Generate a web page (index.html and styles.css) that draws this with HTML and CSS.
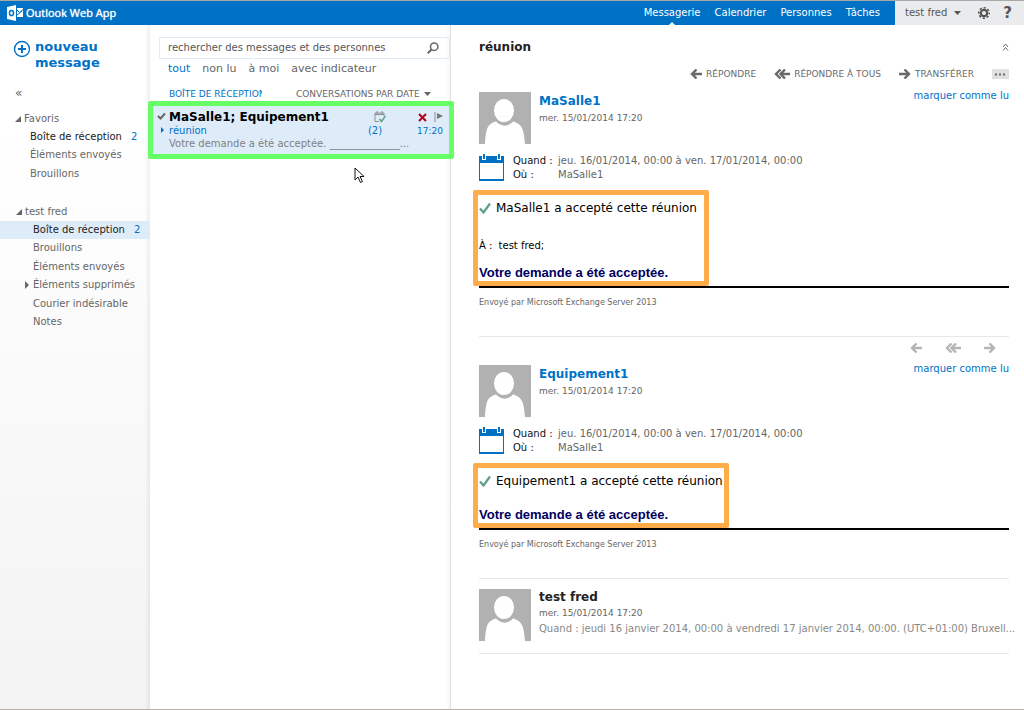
FILE: index.html
```html
<!DOCTYPE html>
<html lang="fr">
<head>
<meta charset="utf-8">
<title>Outlook Web App</title>
<link rel="stylesheet" href="styles.css">
</head>
<body>
<svg class="defs" aria-hidden="true">
  <symbol id="person" viewBox="0 0 52 52"><path fill="#b1b1b1" d="M0 0h52v52H0z"/><ellipse cx="25" cy="18.500" rx="10" ry="11.500" fill="#fff"/><path fill="#fff" d="M6 52C7 37 8 32 17 29.500c5 5.500 12 5.500 17 0C43 32 45 37 46 52z"/></symbol>
  <symbol id="calendar" viewBox="0 0 25 27"><path fill="#0072c6" d="M0 2h25v25H0z"/><path fill="#fff" d="M1 9h23v16H1zM3 0h4v6H3zM18 0h4v6h-4z"/><path fill="#0072c6" d="M4 0h2v5H4zM19 0h2v5h-2z"/></symbol>
  <symbol id="left" viewBox="0 0 12 10"><path d="M6.500 .500L2 5l4.500 4.500M2 5h10" fill="none" stroke="currentColor" stroke-width="2.400"/></symbol>
  <symbol id="left-all" viewBox="0 0 16 10"><path d="M6.500 .500L2 5l4.500 4.500M11 .500L6.500 5 11 9.500M6 5h10" fill="none" stroke="currentColor" stroke-width="2.400"/></symbol>
  <symbol id="right" viewBox="0 0 12 10"><path d="M5.500 .500L10 5 5.500 9.500M10 5H0" fill="none" stroke="currentColor" stroke-width="2.400"/></symbol>
  <symbol id="tick" viewBox="0 0 12 12"><path d="M1 6.500l3.500 4L11 1.500" fill="none" stroke="currentColor" stroke-width="2.200"/></symbol>
  <symbol id="caret" viewBox="0 0 7 4"><path d="M0 0h7L3.500 4z" fill="currentColor"/></symbol>
  <symbol id="open" viewBox="0 0 6 6"><path d="M6 0v6H0z" fill="currentColor"/></symbol>
  <symbol id="closed" viewBox="0 0 4 8"><path d="M0 0l4 4-4 4z" fill="currentColor"/></symbol>
</svg>

<header class="topbar">
  <a class="brand" href="#">
    <svg width="16" height="16" viewBox="0 0 16 16"><path fill="#fff" d="M0 2l9-2v16l-9-2zM10 3h6v9h-6z"/><ellipse cx="4.500" cy="8" rx="2" ry="2.600" fill="none" stroke="#0072c6" stroke-width="1.500"/><path d="M10 5l2.500 2.500L16 4.500M10 10l5-4" fill="none" stroke="#0072c6"/></svg>
    Outlook Web App
  </a>
  <nav class="modules">
    <a class="current" href="#">Messagerie</a>
    <a href="#">Calendrier</a>
    <a href="#">Personnes</a>
    <a href="#">Tâches</a>
  </nav>
  <div class="account">
    <button class="user">test fred <svg width="7" height="4"><use href="#caret"/></svg></button>
    <button aria-label="Paramètres"><svg width="12" height="12" viewBox="0 0 12 12"><g stroke="#555" fill="none"><circle cx="6" cy="6" r="3.200" stroke-width="2.200"/><circle cx="6" cy="6" r="5.200" stroke-width="1.600" stroke-dasharray="2.200 1.884" stroke-dashoffset="1.100"/></g></svg></button>
    <button class="help" aria-label="Aide">?</button>
  </div>
</header>

<main class="panes">
  <aside class="folders">
    <button class="compose">
      <svg width="18" height="18" viewBox="0 0 18 18" fill="none" stroke="#0072c6"><circle cx="9" cy="9" r="7.500" stroke-width="1.400"/><path d="M5 9h8M9 5v8" stroke-width="2"/></svg>
      <span>nouveau message</span>
    </button>
    <button class="collapse" aria-label="Réduire">«</button>
    <section class="group">
      <h2><svg width="6" height="6"><use href="#open"/></svg>Favoris</h2>
      <ul>
        <li><a class="unread" href="#">Boîte de réception <b>2</b></a></li>
        <li><a href="#">Éléments envoyés</a></li>
        <li><a href="#">Brouillons</a></li>
      </ul>
    </section>
    <section class="group mailbox">
      <h2><svg width="6" height="6"><use href="#open"/></svg>test fred</h2>
      <ul>
        <li class="selected"><a class="unread" href="#">Boîte de réception <b>2</b></a></li>
        <li><a href="#">Brouillons</a></li>
        <li><a href="#">Éléments envoyés</a></li>
        <li class="parent"><svg width="4" height="8"><use href="#closed"/></svg><a href="#">Éléments supprimés</a></li>
        <li><a href="#">Courier indésirable</a></li>
        <li><a href="#">Notes</a></li>
      </ul>
    </section>
  </aside>

  <section class="list">
    <div class="search">
      <input type="text" aria-label="Rechercher" placeholder="rechercher des messages et des personnes">
      <button aria-label="Lancer la recherche"><svg width="12" height="12" viewBox="0 0 12 12" fill="none" stroke="#666"><circle cx="7.200" cy="4.700" r="3.700" stroke-width="1.500"/><path d="M4.500 7.500L.800 11.200" stroke-width="2"/></svg></button>
    </div>
    <nav class="filters">
      <a class="on" href="#">tout</a><a href="#">non lu</a><a href="#">à moi</a><a href="#">avec indicateur</a>
    </nav>
    <div class="sort">
      <span class="where">BOÎTE DE RÉCEPTION</span>
      <button>CONVERSATIONS PAR DATE <svg width="7" height="4"><use href="#caret"/></svg></button>
    </div>
    <article class="conversation">
      <div class="row names">
        <svg class="check" width="9" height="8" viewBox="0 0 9 8"><path d="M1 4l2.500 2.500L8 1.500" fill="none" stroke="#666" stroke-width="2"/></svg>
        <h3>MaSalle1; Equipement1</h3>
        <svg class="accepted" width="12" height="12" viewBox="0 0 12 12" fill="none"><path d="M5 10.500H1V2h9v3M1 3.500h9M3 0v3M8 0v3" stroke="#8a8f94"/><path d="M5.500 8l2 2.500L11.500 5" stroke="#5c9f86" stroke-width="1.500"/></svg>
        <button aria-label="Supprimer"><svg width="9" height="9" viewBox="0 0 9 9"><path d="M1 1l7 7M8 1L1 8" stroke="#b3001b" stroke-width="2"/></svg></button>
        <button aria-label="Indicateur"><svg width="9" height="10" viewBox="0 0 9 10"><path d="M1 0v10" stroke="#8a8f94"/><path d="M3 1l6 3-6 3z" fill="#777"/></svg></button>
      </div>
      <div class="row subject">
        <svg class="expand" width="3" height="6"><use href="#closed"/></svg>
        <a href="#">réunion</a><span class="count">(2)</span><time>17:20</time>
      </div>
      <p>Votre demande a été acceptée. ______________...</p>
      <span class="mark green"></span>
    </article>
    <svg class="pointer" width="11" height="17" viewBox="0 0 11 17"><path d="M1 1v12l3-3 2.500 5.500 2-1L6 9.500h4z" fill="#fff" stroke="#111"/></svg>
  </section>

  <section class="reading">
    <header class="title"><h1>réunion</h1><button aria-label="Tout réduire"><svg width="7" height="8" viewBox="0 0 7 8"><path d="M1 4l2.500-3L6 4M1 7.500l2.500-3 2.500 3" fill="none" stroke="#666"/></svg></button></header>

    <article class="message">
      <div class="actions">
        <button><svg width="12" height="10"><use href="#left"/></svg>RÉPONDRE</button>
        <button><svg width="16" height="10"><use href="#left-all"/></svg>RÉPONDRE À TOUS</button>
        <button><svg width="12" height="10"><use href="#right"/></svg>TRANSFÉRER</button>
        <button class="more" aria-label="Plus"><svg width="11" height="3" viewBox="0 0 11 3"><path d="M0 .500h2v2H0zM4 .500h2v2H4zM8 .500h2v2H8z" fill="#666"/></svg></button>
      </div>
      <div class="sender">
        <svg width="52" height="52"><use href="#person"/></svg>
        <div class="who"><h2>MaSalle1</h2><time>mer. 15/01/2014 17:20</time></div>
        <a href="#">marquer comme lu</a>
      </div>
      <div class="when">
        <svg width="25" height="27"><use href="#calendar"/></svg>
        <dl><dt>Quand :</dt><dd>jeu. 16/01/2014, 00:00 à ven. 17/01/2014, 00:00</dd><dt>Où :</dt><dd>MaSalle1</dd></dl>
      </div>
      <div class="answer">
        <p class="status"><svg width="12" height="12"><use href="#tick"/></svg>MaSalle1 a accepté cette réunion</p>
        <p class="to"><span>À :</span> test fred;</p>
        <p class="result">Votre demande a été acceptée.</p>
        <span class="mark orange wide"></span>
      </div>
      <p class="sent">Envoyé par Microsoft Exchange Server 2013</p>
    </article>

    <article class="message">
      <div class="actions quiet">
        <button aria-label="Répondre"><svg width="12" height="10"><use href="#left"/></svg></button>
        <button aria-label="Répondre à tous"><svg width="16" height="10"><use href="#left-all"/></svg></button>
        <button aria-label="Transférer"><svg width="12" height="10"><use href="#right"/></svg></button>
      </div>
      <div class="sender">
        <svg width="52" height="52"><use href="#person"/></svg>
        <div class="who"><h2>Equipement1</h2><time>mer. 15/01/2014 17:20</time></div>
        <a href="#">marquer comme lu</a>
      </div>
      <div class="when">
        <svg width="25" height="27"><use href="#calendar"/></svg>
        <dl><dt>Quand :</dt><dd>jeu. 16/01/2014, 00:00 à ven. 17/01/2014, 00:00</dd><dt>Où :</dt><dd>MaSalle1</dd></dl>
      </div>
      <div class="answer">
        <p class="status"><svg width="12" height="12"><use href="#tick"/></svg>Equipement1 a accepté cette réunion</p>
        <p class="result">Votre demande a été acceptée.</p>
        <span class="mark orange"></span>
      </div>
      <p class="sent">Envoyé par Microsoft Exchange Server 2013</p>
    </article>

    <article class="message closed">
      <div class="sender">
        <svg width="52" height="52"><use href="#person"/></svg>
        <div class="who"><h2>test fred</h2><time>mer. 15/01/2014 17:20</time>
          <p>Quand : jeudi 16 janvier 2014, 00:00 à vendredi 17 janvier 2014, 00:00. (UTC+01:00) Bruxell...</p></div>
      </div>
    </article>
  </section>
</main>
</body>
</html>
```

FILE: styles.css
```css
* { box-sizing: border-box; }
body, h1, h2, h3, p, ul, dl, dd { margin: 0; padding: 0; font-weight: normal; }
body {
  display: flex;
  flex-direction: column;
  min-height: 100vh;
  border-top: 1px solid #a9a9a9;
  border-bottom: 1px solid #b5b2af;
  background: #fff;
  color: #666;
  font: 10px/14px "DejaVu Sans", sans-serif;
}
a { color: inherit; text-decoration: none; }
button { padding: 0; border: 0; background: none; color: inherit; font: inherit; text-align: left; }
ul { list-style: none; }
svg { flex: none; display: block; }
.defs { display: none; }

/* top bar */
.topbar { display: flex; height: 24px; background: #0072c6; color: #fff; }
.brand { display: flex; align-items: center; gap: 3px; padding-left: 7px; font: 11px/24px "Open Sans", sans-serif; text-shadow: 0 0 1px #fff; }
.modules { display: flex; gap: 14px; margin-left: auto; padding-right: 15px; line-height: 24px; }
.current { position: relative; }
.current::after { content: ""; position: absolute; left: 50%; bottom: 0; margin-left: -3px; border: 3px solid transparent; border-top: 0; border-bottom-color: #fff; }
.account { display: flex; align-items: center; gap: 17px; padding: 0 12px 0 10px; background: #eaebec; color: #555; }
.user { display: flex; align-items: center; gap: 7px; }
.help { font-size: 15px; font-weight: bold; margin-left: -4px; }

.panes { display: grid; grid-template-columns: 150px 301px minmax(0, 1fr); flex: 1; }

/* folder pane */
.folders { padding-top: 14px; background: linear-gradient(to right, transparent 145px, #00000010), linear-gradient(#fff 15%, #f3f3f3); }
.compose { display: flex; gap: 4px; width: 120px; padding-left: 13px; color: #0072c6; font-size: 13px; font-weight: bold; line-height: 16px; }
.compose svg { margin-top: 1px; }
.collapse { display: block; margin: 14px 0 9px 15px; font-size: 12px; line-height: 16px; }
.group h2 { display: flex; align-items: center; gap: 3px; padding-left: 15px; font-size: 10px; line-height: 18px; }
.group li { position: relative; padding-left: 30px; line-height: 18px; }
.group li:nth-child(even) { margin-bottom: 1px; }
.group b { margin-left: 6px; color: #0072c6; font-weight: normal; }
.unread { color: #222; }
.mailbox { margin-top: 20px; }
.mailbox h2 { padding-left: 16px; }
.mailbox li { padding-left: 33px; }
.mailbox .selected { background: #deecf9; }
.parent svg { position: absolute; left: 25px; top: 5px; }

/* message list */
.list { position: relative; padding: 12px 0 0 1px; border-right: 1px solid #e3e3e3; background: linear-gradient(to left, #f6f6f6, #fff 4px); }
.search { display: flex; align-items: center; justify-content: space-between; height: 22px; margin-left: 8px; padding: 0 10px 0 8px; border: 1px solid #dfebf7; }
.search input { flex: 1; min-width: 0; padding: 0; border: 0; outline: 0; background: none; font: inherit; color: #555; }
.search input::placeholder { color: #555; opacity: 1; }
.filters { display: flex; gap: 12px; padding: 2px 0 0 17px; font-size: 11px; line-height: 16px; }
.on { color: #0072c6; }
.sort { display: flex; gap: 34px; padding: 10px 0 4px 18px; font-size: 9px; }
.where { width: 93px; overflow: hidden; white-space: nowrap; color: #0072c6; }
.sort button { display: flex; align-items: center; gap: 4px; }
.conversation { position: relative; height: 50px; padding: 5px 7px 0 16px; background: #deecf9; border-left: 1px solid #0072c6; margin-left: 1px; }
.row { display: flex; align-items: center; }
.names { gap: 7px; line-height: 14px; }
.names h3 { flex: none; color: #000; font-size: 12px; font-weight: bold; white-space: nowrap; }
.accepted { margin: 0 25px 0 auto; }
.check { position: absolute; left: 4px; top: 7px; }
.expand { position: absolute; left: 8px; top: 22px; }
.subject { color: #0072c6; line-height: 14px; }
.count { margin-left: auto; }
.subject time { margin-left: 35px; font-size: 9px; }
.conversation p { color: #808080; line-height: 12px; white-space: nowrap; }
.pointer { position: absolute; left: 204px; top: 142px; }

/* annotation frames laid over the content */
.mark { position: absolute; border: 5px solid; border-radius: 2px; pointer-events: none; }
.green { inset: -4px -4px -4px -5px; border-color: #6f6; }
.orange { inset: -9px -6px -4px -6px; border-color: #ffac4a; }
.orange.wide { right: -12px; }

/* reading pane */
.reading { padding: 14px 15px 0 28px; }
.title { display: flex; justify-content: space-between; color: #222; line-height: 16px; }
.title h1 { font-size: 12px; font-weight: bold; }
.message { border-bottom: 1px solid #e8e8e8; }
.message + .message { padding-top: 4px; }
.actions { display: flex; justify-content: flex-end; gap: 18px; padding: 12px 0 11px; color: #6a6a6a; font-size: 9px; }
.actions button { display: flex; align-items: center; gap: 4px; }
.actions .more { padding: 0 3px; background: #e1e1e1; height: 10px; align-self: center; }
.message .quiet { gap: 23px; padding: 2px 13px 12px 0; color: #b5b5b5; }
.sender { display: flex; gap: 8px; }
.who { flex: 1; min-width: 0; line-height: 16px; }
.who h2 { color: #0072c6; font-size: 12px; font-weight: bold; line-height: 18px; }
.who time { display: block; font-size: 9px; }
.who p { white-space: nowrap; color: #888; }
.sender > a { color: #0072c6; line-height: 8px; }
.when { display: flex; gap: 9px; padding: 10px 0 17px; }
.when dl { display: grid; grid-template-columns: 45px 1fr; line-height: 14px; }
.when dt { color: #111; }
.answer { position: relative; width: max-content; color: #000; }
.status { display: flex; align-items: center; gap: 5px; font-size: 12px; line-height: 18px; }
.status svg { color: #5c9f86; }
.to { padding-top: 22px; }
.to span { margin-right: 3px; }
.result { padding-top: 11px; color: #000060; font: bold 13px/18px "Liberation Sans", sans-serif; }
.status + .result { padding-top: 16px; }
.sent { margin-top: 4px; padding: 9px 0 27px; border-top: 2px solid #000; font-size: 8px; line-height: 12px; }
.message.closed { padding: 10px 0 12px; }
.closed .who h2 { color: #222; line-height: 16px; }
```
